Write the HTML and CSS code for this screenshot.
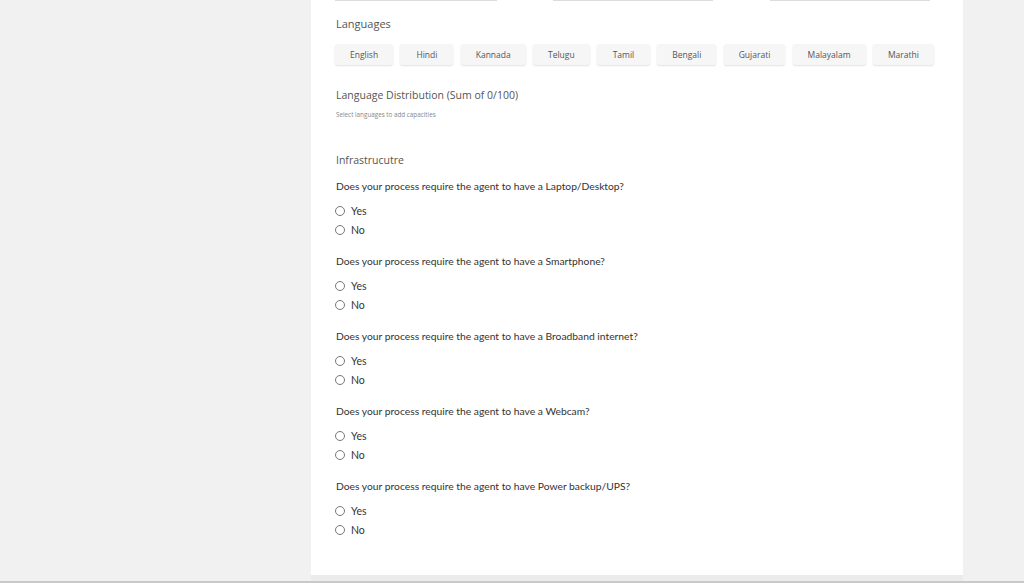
FILE: index.html
```html
<!DOCTYPE html>
<html>
<head>
<meta charset="utf-8">
<link rel="stylesheet" href="styles.css">
</head>
<body>
<div class="page">
  <div class="panel">
    <div class="top-fields">
      <div class="field-edge f1"></div>
      <div class="field-edge f2"></div>
      <div class="field-edge f3"></div>
    </div>

    <div class="section-label">Languages</div>
    <div class="lang-list">
      <button class="lang">English</button>
      <button class="lang">Hindi</button>
      <button class="lang">Kannada</button>
      <button class="lang">Telugu</button>
      <button class="lang">Tamil</button>
      <button class="lang">Bengali</button>
      <button class="lang">Gujarati</button>
      <button class="lang">Malayalam</button>
      <button class="lang">Marathi</button>
    </div>

    <div class="dist-label">Language Distribution (Sum of 0/100)</div>
    <div class="hint">Select languages to add capacities</div>

    <div class="section-label infra">Infrastrucutre</div>

    <div class="question">
      <div class="q-text">Does your process require the agent to have a Laptop/Desktop?</div>
      <label class="opt"><span class="radio"></span>Yes</label>
      <label class="opt"><span class="radio"></span>No</label>
    </div>
    <div class="question">
      <div class="q-text">Does your process require the agent to have a Smartphone?</div>
      <label class="opt"><span class="radio"></span>Yes</label>
      <label class="opt"><span class="radio"></span>No</label>
    </div>
    <div class="question">
      <div class="q-text">Does your process require the agent to have a Broadband internet?</div>
      <label class="opt"><span class="radio"></span>Yes</label>
      <label class="opt"><span class="radio"></span>No</label>
    </div>
    <div class="question">
      <div class="q-text">Does your process require the agent to have a Webcam?</div>
      <label class="opt"><span class="radio"></span>Yes</label>
      <label class="opt"><span class="radio"></span>No</label>
    </div>
    <div class="question">
      <div class="q-text">Does your process require the agent to have Power backup/UPS?</div>
      <label class="opt"><span class="radio"></span>Yes</label>
      <label class="opt"><span class="radio"></span>No</label>
    </div>
  </div>
  <div class="panel-foot"></div>
</div>
<div class="bottom-line"></div>
</body>
</html>
```

FILE: styles.css
```css
html, body {
  margin: 0;
  padding: 0;
  background: #f1f1f1;
  height: 583px;
  overflow: hidden;
}

.page {
  margin-left: 311px;
  width: 652px;
}

.panel {
  background: #ffffff;
  height: 575px;
  padding: 0 0 0 24px;
  box-sizing: border-box;
  font-family: "Open Sans", sans-serif;
}

.panel-foot {
  height: 6px;
  background: #ebebeb;
}

.bottom-line {
  height: 2px;
  background: #c9c9c9;
}

.top-fields {
  display: flex;
  height: 1px;
}

.field-edge {
  height: 1px;
  background: #dcdcdc;
}
.f1 { width: 162px; }
.f2 { width: 160px; margin-left: 56px; }
.f3 { width: 160px; margin-left: 57px; }

.section-label {
  margin: 15px 0 0 1px;
  font-size: 11px;
  line-height: 15px;
  color: #555555;
}

.lang-list {
  display: flex;
  gap: 7.3px;
  margin-top: 13px;
}

.lang {
  font-family: "Open Sans", sans-serif;
  font-size: 8.5px;
  color: #555555;
  background: #f6f6f6;
  border: none;
  border-radius: 3px;
  box-shadow: 0 1px 2px rgba(0, 0, 0, 0.12);
  height: 21px;
  min-width: 53px;
  padding: 0 15px;
  margin: 0;
}

.dist-label {
  margin: 23px 0 0 1px;
  font-size: 10.5px;
  line-height: 15px;
  color: #555555;
}

.hint {
  margin: 8px 0 0 1px;
  font-size: 6.3px;
  line-height: 8px;
  color: #888888;
}

.section-label.infra {
  margin-top: 34px;
  font-size: 10.5px;
}

.question {
  font-family: Lato, sans-serif;
  color: #333333;
}

.q-text {
  margin: 11px 0 0 1px;
  font-size: 10.3px;
  line-height: 14px;
}

.question + .question .q-text {
  margin-top: 17px;
}

.opt {
  display: flex;
  align-items: center;
  margin-top: 11px;
  font-size: 10.5px;
  line-height: 14px;
}

.opt + .opt {
  margin-top: 5px;
}

.radio {
  width: 8px;
  height: 8px;
  border: 1px solid #777777;
  border-radius: 50%;
  margin: 0 6px 0 0;
  box-sizing: content-box;
  flex: none;
}
```
